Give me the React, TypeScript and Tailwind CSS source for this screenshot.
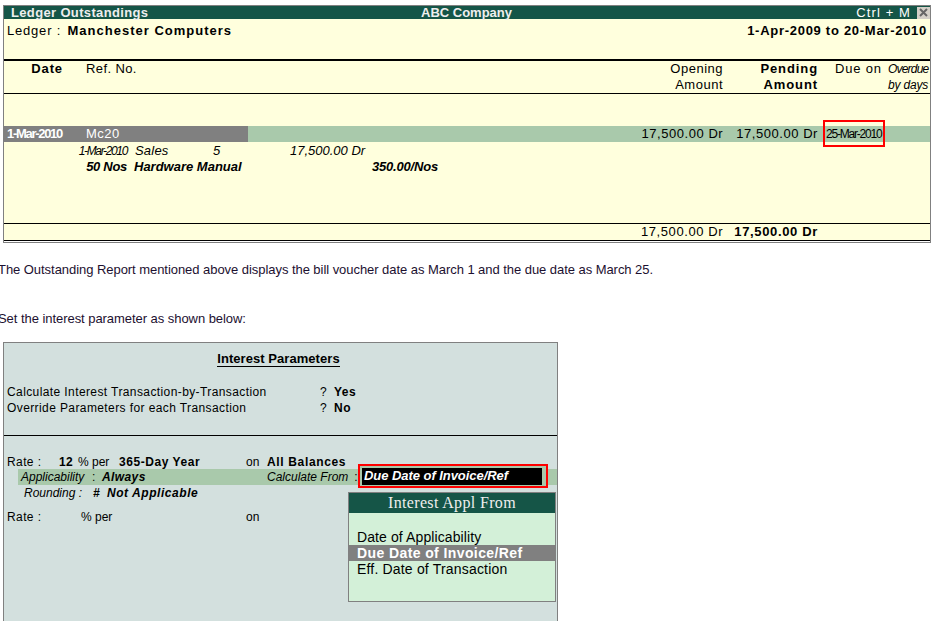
import React from 'react';

const FONT = "font-['Liberation_Sans',Arial,sans-serif]";

const App: React.FC = () => {
  return (
    <div className={`w-[937px] h-[621px] overflow-hidden bg-white pt-[5px] text-black ${FONT}`}>
      {/* Ledger Outstandings report */}
      <div className="ml-[3px] w-[928px] border border-b-0 border-[#808080] bg-[#ffffdd]">
        <div className="flex h-[13px] items-center bg-[#155547] text-[13px] font-bold leading-[13px] text-[#eeeeee]">
          <div className="w-[417px] pl-[7px] tracking-[0.35px]">Ledger Outstandings</div>
          <div className="w-[300px]">ABC Company</div>
          <div className="flex-1 pr-[6px] text-right font-normal tracking-[1.1px] text-white">Ctrl + M</div>
          <div className="flex h-[12px] w-[13px] items-center justify-center bg-[#d4d0c8]">
            <svg width="9" height="9" viewBox="0 0 9 9">
              <path d="M1 1 L8 8 M8 1 L1 8" stroke="#666666" strokeWidth="2" />
            </svg>
          </div>
        </div>

        <div className="flex h-[40px] items-start justify-between pt-[4px] pl-[3px] pr-[3px] text-[13px] leading-[16px] tracking-[0.8px]">
          <div>
            Ledger : <span className="ml-[2px] font-bold tracking-[1px]">Manchester Computers</span>
          </div>
          <div className="font-bold tracking-[0.72px]">1-Apr-2009 to 20-Mar-2010</div>
        </div>

        {/* Column headers */}
        <div className="flex h-[35px] border-t-2 border-b border-black text-[13px] leading-[16px] tracking-[0.5px]">
          <div className="w-[59px] text-right font-bold tracking-[0.9px]">Date</div>
          <div className="ml-[23px] w-[100px] tracking-[0.4px]">Ref. No.</div>
          <div className="ml-auto w-[120px] text-right">Opening<br />Amount</div>
          <div className="ml-[10px] w-[85px] text-right font-bold tracking-[0.9px]">Pending<br />Amount</div>
          <div className="ml-[17px] w-[47px] whitespace-nowrap tracking-[0.8px]">Due on</div>
          <div className="ml-[6px] w-[42px] whitespace-nowrap pr-[2px] text-right text-[12px] italic">
            <div className="tracking-[-0.8px]">Overdue</div>
            <div className="tracking-[-0.2px]">by days</div>
          </div>
        </div>

        <div className="h-[32px]" />

        {/* Selected bill row */}
        <div className="flex h-[16px] items-center bg-[#a9c9ab] text-[13px] leading-[16px]">
          <div className="flex h-full w-[244px] items-center bg-[#808080] text-white">
            <span className="w-[82px] pl-[3px] font-bold tracking-[-1.3px]">1-Mar-2010</span>
            <span className="tracking-[0.5px]">Mc20</span>
          </div>
          <div className="ml-auto whitespace-nowrap tracking-[0.55px]">17,500.00 Dr</div>
          <div className="ml-[13px] whitespace-nowrap tracking-[0.55px]">17,500.00 Dr</div>
          <div className="ml-[8px] w-[104px] whitespace-nowrap text-[12px] tracking-[-1.2px]">25-Mar-2010</div>
        </div>

        {/* Voucher detail lines */}
        <div className="h-[81px] pt-[1px] text-[13px] italic leading-[16px]">
          <div className="flex whitespace-nowrap">
            <div className="w-[123px] text-right text-[12px] tracking-[-1.35px]">1-Mar-2010</div>
            <div className="ml-[8px] w-[78px] tracking-[0.2px]">Sales</div>
            <div className="w-[77px] tracking-[0.3px]">5</div>
            <div>17,500.00 Dr</div>
          </div>
          <div className="flex whitespace-nowrap font-bold">
            <div className="w-[123px] text-right tracking-[-0.3px]">50 Nos</div>
            <div className="ml-[7px] w-[238px]">Hardware Manual</div>
            <div className="tracking-[-0.2px]">350.00/Nos</div>
          </div>
        </div>

        {/* Totals */}
        <div className="flex h-[17px] items-center justify-end border-t border-black pr-[112px] text-[13px] leading-[16px]">
          <div className="tracking-[0.6px]">17,500.00 Dr</div>
          <div className="ml-[11px] font-bold tracking-[0.65px]">17,500.00 Dr</div>
        </div>
        <div className="h-[3px] border-t border-b border-t-black border-b-[#808080] bg-white" />
      </div>

      {/* Article text */}
      <p className="mt-[19px] -ml-[2px] text-[13px] leading-[16px] tracking-[-0.05px] text-[#1c1030]">
        The Outstanding Report mentioned above displays the bill voucher date as March 1 and the due date as March 25.
      </p>
      <p className="mt-[33px] -ml-[2px] text-[13px] leading-[16px] tracking-[-0.05px] text-[#1c1030]">
        Set the interest parameter as shown below:
      </p>

      {/* Interest Parameters screen */}
      <div className="relative mt-[15px] ml-[3px] h-[290px] w-[555px] border border-[#808080] bg-[#d3e0de] text-[12px] leading-[16px]">
        <div className="flex justify-center pt-[8px] pr-[4px]">
          <span className="border-b border-black text-[13px] font-bold leading-[15px] tracking-[0.05px]">Interest Parameters</span>
        </div>

        <div className="mt-[17px] h-[52px] border-b border-black pl-[3px] tracking-[0.4px]">
          <div className="flex">
            <div className="w-[313px]">Calculate Interest Transaction-by-Transaction</div>
            <div>?</div>
            <div className="ml-[7px] font-bold">Yes</div>
          </div>
          <div className="flex">
            <div className="w-[313px]">Override Parameters for each Transaction</div>
            <div>?</div>
            <div className="ml-[7px] font-bold">No</div>
          </div>
        </div>

        <div className="mt-[19px] flex h-[14px] whitespace-nowrap pl-[3px] leading-[14px]">
          <div className="w-[52px] tracking-[0.4px]">Rate :</div>
          <div className="w-[19px] font-bold tracking-[0.4px]">12</div>
          <div className="w-[41px]">% per</div>
          <div className="w-[127px] font-bold tracking-[0.55px]">365-Day Year</div>
          <div className="w-[21px]">on</div>
          <div className="font-bold tracking-[0.65px]">All Balances</div>
        </div>
        <div className="ml-[14px] flex h-[16px] items-center whitespace-nowrap bg-[#a9c9ab] pl-[3px] italic">
          <div className="w-[71px]">Applicability</div>
          <div className="w-[10px] not-italic">:</div>
          <div className="w-[165px] font-bold tracking-[0.4px]">Always</div>
          <div>Calculate From</div>
          <div className="ml-[6px] not-italic">:</div>
        </div>
        <div className="ml-[20px] flex whitespace-nowrap italic">
          <div className="w-[69px]">Rounding :</div>
          <div className="w-[14px] font-bold">#</div>
          <div className="font-bold tracking-[0.55px]">Not Applicable</div>
        </div>
        <div className="mt-[8px] flex whitespace-nowrap pl-[3px]">
          <div className="w-[74px] tracking-[0.4px]">Rate :</div>
          <div className="w-[165px]">% per</div>
          <div>on</div>
        </div>

        {/* Highlighted field, sits over the row */}
        <div className="absolute left-[354px] top-[121px] flex h-[24px] w-[190px] items-center border-2 border-[#ff0000] bg-[#a9c9ab] px-[2px]">
          <div className="flex h-[17px] w-[180px] items-center bg-black pl-[2px] text-[13px] font-bold italic tracking-[-0.05px] text-white">
            Due Date of Invoice/Ref
          </div>
        </div>

        {/* Interest Appl From list */}
        <div className="absolute left-[344px] top-[149px] h-[110px] w-[208px] border border-[#808080] bg-[#d3f0d8]">
          <div className="h-[20px] bg-[#155547] text-center font-['Liberation_Serif',serif] text-[16px] leading-[20px] tracking-[0.35px] text-[#eeeeee]">
            Interest Appl From
          </div>
          <div className="pt-[16px] text-[14px] leading-[16px]">
            <div className="pl-[8px] tracking-[0.1px]">Date of Applicability</div>
            <div className="bg-[#808080] pl-[8px] font-bold tracking-[0.4px] text-white">Due Date of Invoice/Ref</div>
            <div className="pl-[8px] tracking-[0.18px]">Eff. Date of Transaction</div>
          </div>
        </div>
      </div>

      {/* Red callout round the due date in the report */}
      <div className="absolute left-[823px] top-[120px] h-[27px] w-[62px] border-2 border-[#ff0000]" />
    </div>
  );
};

export default App;
